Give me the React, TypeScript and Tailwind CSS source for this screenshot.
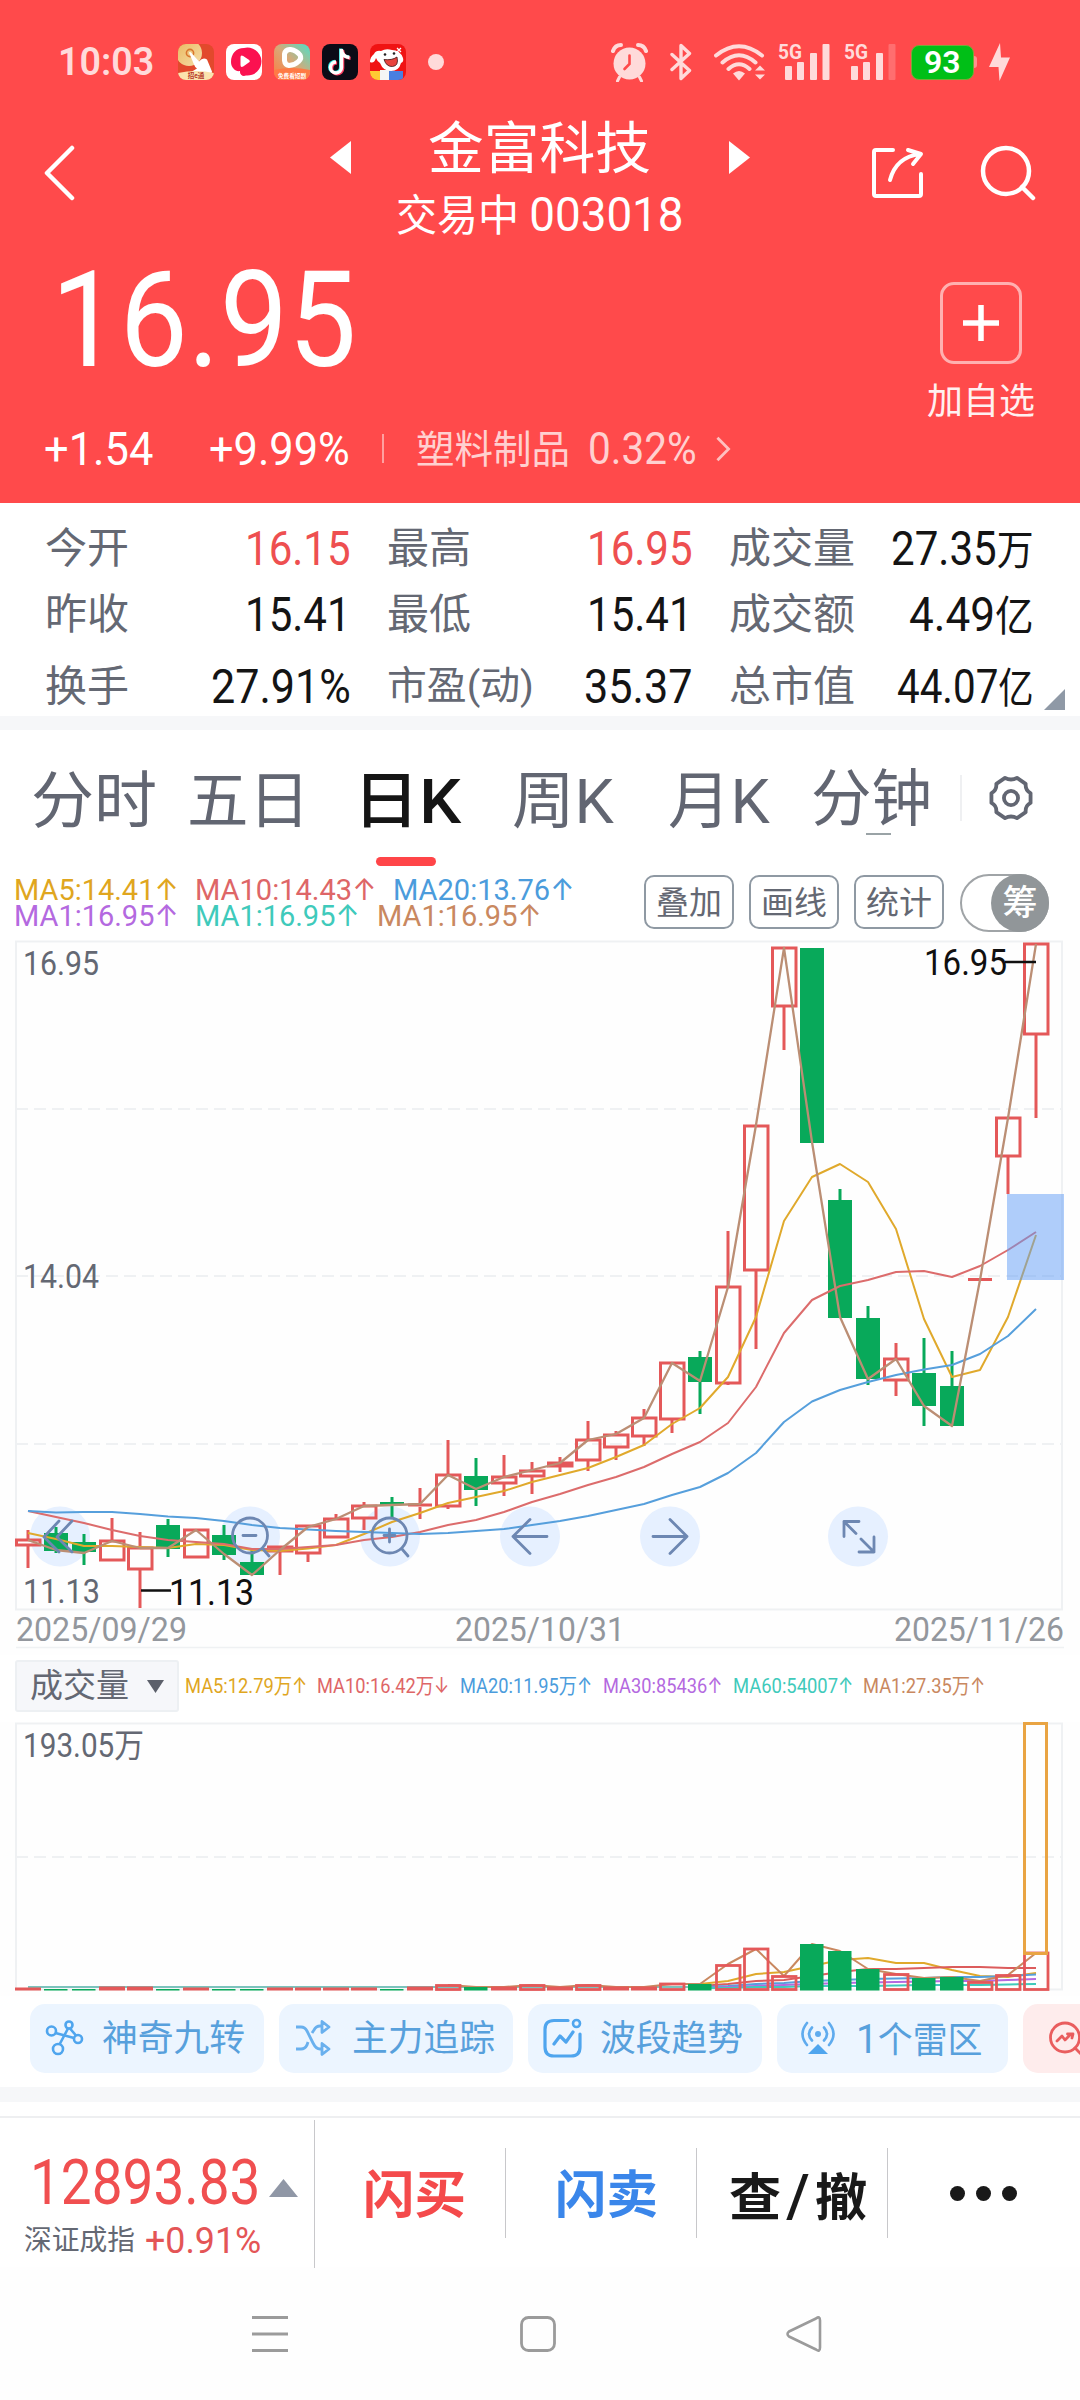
import { useLayoutEffect, useRef } from "react";
import type { ReactNode } from "react";

/* Condenses its text horizontally so that it fills the width set by className. */
function Fit({ className, children }: { className: string; children: ReactNode }) {
  const outer = useRef<HTMLSpanElement>(null);
  const inner = useRef<HTMLSpanElement>(null);
  useLayoutEffect(() => {
    const fit = () => {
      if (!outer.current || !inner.current) return;
      const w = inner.current.offsetWidth;
      if (w > 0) inner.current.style.transform = `scaleX(${outer.current.offsetWidth / w})`;
    };
    fit();
    document.fonts?.ready.then(fit);
  }, []);
  return (
    <span ref={outer} className={`block shrink-0 ${className}`}>
      <span ref={inner} className="inline-block origin-left whitespace-pre">
        {children}
      </span>
    </span>
  );
}

function StatusBar() {
  return (
    <div className="flex h-[112px] items-center pt-[12px] text-[#ffdada]">
      <Fit className="ml-[58px] w-[96px] text-[38px] leading-[40px] font-semibold">10:03</Fit>
      <div className="ml-[24px] flex gap-[12px]">
        <svg width="36" height="36" viewBox="0 0 36 36">
          <defs>
            <clipPath id="app"><rect width="36" height="36" rx="8" /></clipPath>
            <linearGradient id="gold" x1="0" y1="0" x2="1" y2="1">
              <stop offset="0" stopColor="#e9b65c" /><stop offset="1" stopColor="#f6dfa8" />
            </linearGradient>
            <linearGradient id="mix" x1="0" y1="1" x2="1" y2="0">
              <stop offset="0" stopColor="#ff7a3d" /><stop offset="0.5" stopColor="#d9a877" /><stop offset="1" stopColor="#4ee0c8" />
            </linearGradient>
          </defs>
          <g clipPath="url(#app)">
            <rect width="36" height="36" fill="#e2492c" />
            <circle cx="11" cy="9" r="13" fill="url(#gold)" />
            <circle cx="12" cy="9" r="3.6" fill="none" stroke="#d9772e" strokeWidth="1.6" />
            <path d="M11 8.500q1-1 2 0l8 9q4-5 8-2l5 12-1 4H18l-4-4 5-3q-2-1-3-4z" fill="#fff" />
            <path d="M0 29q18-4 36 0v8H0z" fill="#fbe3ae" />
          </g>
          <text x="18" y="34" fontSize="6.5" fontWeight="700" textAnchor="middle" fill="#b5372a">招e通</text>
        </svg>
        <svg width="36" height="36" viewBox="0 0 36 36">
          <rect width="36" height="36" rx="8" fill="#fff" />
          <path d="M18 4a14 14 0 1 1 2 27.500c-3 1.500-6.500-.5-6-4.500-4 1-9-3-9-9C5 10 10 4 18 4z" fill="#fb1150" />
          <path d="M14.500 13.500q0-3 2.700-1.500l5.600 3.700q2 1.500 0 2.800l-5.600 4q-2.700 1.300-2.700-1.500z" fill="#fff" />
        </svg>
        <svg width="36" height="36" viewBox="0 0 36 36">
          <g clipPath="url(#app)">
            <rect width="36" height="36" fill="url(#mix)" />
            <path d="M0 26q18-4 36 0v10H0z" fill="#ff7a45" />
          </g>
          <path d="M10.500 10q1-5 6-4.500 6 1 9.500 5.500 2 3.500-1.500 6.500-4 3.800-9.500 4-4-.5-4.500-5z" fill="none" stroke="#fff" strokeWidth="5" strokeLinejoin="round" />
          <text x="18" y="33.500" fontSize="5.600" fontWeight="700" textAnchor="middle" fill="#fff">免费看短剧</text>
        </svg>
        <svg width="36" height="36" viewBox="0 0 36 36">
          <rect width="36" height="36" rx="8" fill="#0b0b16" />
          <g fill="none" strokeWidth="3.400">
            <path d="M19.500 5v18.500a5.500 5.500 0 1 1-5.500-5.500M19.500 6c.5 4.500 3.500 7 8 7.500" stroke="#35e6e0" transform="translate(-.8 -.6)" />
            <path d="M19.500 5v18.500a5.500 5.500 0 1 1-5.500-5.500M19.500 6c.5 4.500 3.500 7 8 7.500" stroke="#ff3f63" transform="translate(1.100 .9)" />
            <path d="M19.500 5v18.500a5.500 5.500 0 1 1-5.500-5.500M19.500 6c.5 4.500 3.500 7 8 7.500" stroke="#fff" />
          </g>
        </svg>
        <svg width="36" height="36" viewBox="0 0 36 36">
          <g clipPath="url(#app)">
            <rect width="36" height="36" fill="#f01313" />
            <path d="M4 10q2-4 7-3 5-3 11-1 8 0 11 8 1 4-2 5-2 8-10 8-8 0-11-8-3-2-4-5-2 6-6 4 0-5 4-8z" fill="#fff" />
            <path d="M0 27h10v9H0z" fill="#ffc933" />
            <rect x="10" y="26" width="10" height="10" fill="#f5f5f5" />
            <rect x="19" y="27" width="14" height="9" fill="#4a7fe0" />
          </g>
          <path d="M14 15.500q8 1 13-2.500 2 9-4.500 9.500-6 .5-8.500-7z" fill="#e8443e" stroke="#3a1515" strokeWidth=".8" />
          <circle cx="15" cy="10.500" r="1.300" fill="#222" /><circle cx="24" cy="9.500" r="1.300" fill="#222" />
          <path d="M27 4l4 4m0-4-4 4" stroke="#fff" strokeWidth="1.200" />
        </svg>
      </div>
      <span className="ml-[22px] size-[16px] rounded-full bg-[#ffdada]" />
      <svg className="ml-[167px]" width="37" height="40" viewBox="0 0 37 40" fill="none" stroke="currentColor">
        <circle cx="18.500" cy="21.500" r="16" fill="currentColor" stroke="none" />
        <path d="M2 9Q4 3 10 3M35 9Q33 3 27 3" strokeWidth="4" strokeLinecap="round" />
        <path d="M8.500 35l-2 4M28.500 35l2 4" strokeWidth="3" strokeLinecap="round" />
        <path d="M18.500 13.500v8.500l-5 5" stroke="#ff4a4b" strokeWidth="2.600" strokeLinecap="round" />
      </svg>
      <svg className="ml-[22px]" width="22" height="38" viewBox="0 0 22 38" fill="none" stroke="currentColor" strokeWidth="3.400" strokeLinecap="round" strokeLinejoin="round">
        <path d="M2 11.500l17.500 16L11 35.500V2.500l8.500 8-17.500 16" />
      </svg>
      <svg className="ml-[22px]" width="52" height="38" viewBox="0 0 52 38" fill="none" stroke="currentColor" strokeWidth="4" strokeLinecap="round">
        <path d="M2 12.500Q25 -6 48 12.500M8.500 19.500Q25 5 41.500 19.500M14.500 26Q25 16.500 35.500 26" />
        <path d="M19 30.500q6-5 12 0l-6 7z" fill="currentColor" stroke="none" />
        <path d="M41 27.500l5-5 5 5zM41 31.500l5 5 5-5z" fill="currentColor" stroke="none" />
      </svg>
      <svg className="ml-[12px] overflow-visible" width="54" height="40" viewBox="0 0 54 40" fill="currentColor">
        <text x="0" y="17" fontSize="21" fontWeight="700" textLength="24" lengthAdjust="spacingAndGlyphs">5G</text>
        <rect x="7" y="24" width="7" height="14" rx="1" /><rect x="19" y="20" width="7" height="18" rx="1" />
        <rect x="32" y="11" width="7" height="27" rx="1" /><rect x="44.500" y="2" width="7" height="36" rx="1" />
      </svg>
      <svg className="ml-[12px] overflow-visible" width="54" height="40" viewBox="0 0 54 40" fill="currentColor">
        <text x="0" y="17" fontSize="21" fontWeight="700" textLength="24" lengthAdjust="spacingAndGlyphs">5G</text>
        <rect x="7" y="24" width="7" height="14" rx="1" /><rect x="19" y="20" width="7" height="18" rx="1" />
        <rect x="32" y="11" width="7" height="27" rx="1" /><rect x="44.500" y="2" width="7" height="36" rx="1" opacity=".25" />
      </svg>
      <div className="ml-[13px] flex items-center">
        <span className="flex h-[35px] w-[63px] items-center justify-center rounded-[8px] border border-[#7aa838] bg-[#00bf17] text-white">
          <Fit className="w-[37px] text-[32px] leading-[35px] font-semibold">93</Fit>
        </span>
        <span className="h-[12px] w-[3px] rounded-r-[3px] bg-[#ff8f8f]" />
      </div>
      <svg className="ml-[12px]" width="22" height="40" viewBox="0 0 22 40" fill="currentColor">
        <path d="M11 1L0 25h9.500l1 14L21 15.500h-9z" />
      </svg>
    </div>
  );
}

function Header() {
  return (
    <header className="h-[503px] bg-[#ff4a4b] text-white">
      <StatusBar />
      <div className="flex h-[134px] items-start">
        <svg className="mt-[33px] ml-[43px]" width="32" height="56" viewBox="0 0 32 56" fill="none" stroke="#fff" strokeWidth="4.500" strokeLinecap="round" strokeLinejoin="round">
          <path d="M29 3L4 28l25 25" />
        </svg>
        <svg className="mt-[29px] ml-[255px]" width="21" height="33" viewBox="0 0 21 33" fill="#fff"><path d="M21 0v33L0 16.500z" /></svg>
        <div className="ml-[45px] flex w-[287px] flex-col items-center">
          <Fit className="w-[223px] text-[56px] leading-[74px]">金富科技</Fit>
          <Fit className="w-[288px] text-[43px] leading-[57px]">
            交易中 <span className="text-[48px]">003018</span>
          </Fit>
        </div>
        <svg className="mt-[29px] ml-[46px]" width="21" height="33" viewBox="0 0 21 33" fill="#fff"><path d="M0 0v33l21-16.500z" /></svg>
        <svg className="mt-[33px] ml-[121px]" width="54" height="56" viewBox="0 0 54 56" fill="none" stroke="#fff" strokeWidth="4" strokeLinecap="round" strokeLinejoin="round">
          <path d="M22 5H5q-2 0-2 2v42q0 2 2 2h43q2 0 2-2V29" />
          <path d="M19 35Q25 12 49 9M37 5l13 4-8 10" />
        </svg>
        <svg className="mt-[33px] ml-[55px]" width="56" height="56" viewBox="0 0 56 56" fill="none" stroke="#fff" strokeWidth="4.500" strokeLinecap="round">
          <circle cx="26" cy="26" r="23" /><path d="M42 42l11 11" />
        </svg>
      </div>
      <div className="flex">
        <div>
          <Fit className="ml-[51px] w-[306px] text-[134px] leading-[150px]">16.95</Fit>
          <div className="mt-[-4px] flex h-[113px] items-center text-[47px] leading-[60px]">
            <Fit className="ml-[44px] w-[109px]">+1.54</Fit>
            <Fit className="ml-[56px] w-[141px]">+9.99%</Fit>
            <span className="ml-[32px] h-[29px] w-[2px] bg-[#ffa0a0]" />
            <Fit className="ml-[32px] w-[154px] pt-[2px] text-[39px] text-[#ffd0d0]">塑料制品</Fit>
            <Fit className="ml-[18px] w-[109px] pt-[1px] text-[45px] text-[#ffd0d0]">0.32%</Fit>
            <svg className="ml-[18px]" width="16" height="26" viewBox="0 0 16 28" fill="none" stroke="#ffc0c0" strokeWidth="3"><path d="M2 2l12 12L2 26" /></svg>
          </div>
        </div>
        <div className="mr-[44px] ml-auto flex w-[110px] flex-col items-center pt-[36px]">
          <div className="flex size-[82px] items-center justify-center rounded-[14px] border-[3px] border-[#ffb0b0]">
            <svg width="36" height="36" viewBox="0 0 36 36" stroke="#fff" strokeWidth="5.500"><path d="M18 0v36M0 18h36" /></svg>
          </div>
          <Fit className="w-[108px] text-[36px] leading-[76px] text-[#fff0f0]">加自选</Fit>
        </div>
      </div>
    </header>
  );
}

function Stats() {
  return (
    <section className="relative grid h-[213px] grid-cols-[305px_305px_305px] grid-rows-[66px_66px_70px] gap-x-[37px] bg-white pt-[12px] pl-[45px] text-[48px] leading-[67px] text-[#141414]">
      <div className="flex justify-between"><Fit className="w-[84px] text-[42px] text-[#646873]">今开</Fit><Fit className="mr-[-1px] w-[106px] text-[#ee4f50]">16.15</Fit></div>
      <div className="flex justify-between"><Fit className="w-[84px] text-[42px] text-[#646873]">最高</Fit><Fit className="mr-[-1px] w-[106px] text-[#ee4f50]">16.95</Fit></div>
      <div className="flex justify-between"><Fit className="w-[126px] text-[42px] text-[#646873]">成交量</Fit><Fit className="w-[143px]">27.35<span className="text-[42px]">万</span></Fit></div>
      <div className="flex justify-between"><Fit className="w-[84px] text-[42px] text-[#646873]">昨收</Fit><Fit className="mr-[-1px] w-[106px]">15.41</Fit></div>
      <div className="flex justify-between"><Fit className="w-[84px] text-[42px] text-[#646873]">最低</Fit><Fit className="mr-[-1px] w-[106px]">15.41</Fit></div>
      <div className="flex justify-between"><Fit className="w-[126px] text-[42px] text-[#646873]">成交额</Fit><Fit className="w-[125px]">4.49<span className="text-[42px]">亿</span></Fit></div>
      <div className="flex justify-between leading-[79px]"><Fit className="w-[84px] text-[42px] text-[#646873]">换手</Fit><Fit className="mr-[-1px] w-[140px]">27.91%</Fit></div>
      <div className="flex justify-between leading-[79px]"><Fit className="w-[147px] text-[39px] text-[#646873]">市盈(动)</Fit><Fit className="mr-[-1px] w-[109px]">35.37</Fit></div>
      <div className="flex justify-between leading-[79px]"><Fit className="w-[126px] text-[42px] text-[#646873]">总市值</Fit><Fit className="w-[137px]">44.07<span className="text-[42px]">亿</span></Fit></div>
      <svg className="absolute right-[15px] bottom-[6px]" width="21" height="21" viewBox="0 0 21 21"><path d="M21 0v21H0z" fill="#8f99a6" /></svg>
    </section>
  );
}

function Tabs() {
  return (
    <nav className="flex h-[143px] items-start bg-white text-[62px] leading-[143px] text-[#626672]">
      <Fit className="ml-[31px] w-[126px]">分时</Fit>
      <Fit className="ml-[30px] w-[123px]">五日</Fit>
      <div className="ml-[43px] w-[108px]">
        <Fit className="h-[127px] w-[108px] font-medium text-[#151515]">日K</Fit>
        <div className="ml-[23px] h-[9px] w-[60px] rounded-full bg-[#ff4548]" />
      </div>
      <Fit className="ml-[51px] w-[102px]">周K</Fit>
      <Fit className="ml-[54px] w-[102px]">月K</Fit>
      <div className="ml-[41px] w-[121px]">
        <Fit className="h-[103px] w-[121px] leading-[139px]">分钟</Fit>
        <div className="ml-[55px] h-[2px] w-[25px] bg-[#9aa3a6]" />
      </div>
      <span className="mt-[45px] ml-[28px] h-[46px] w-[2px] bg-[#eff0f2]" />
      <svg className="mt-[43px] ml-[24px]" width="50" height="50" viewBox="0 0 46 46" fill="none" stroke="#626672" strokeWidth="3.500" strokeLinejoin="round">
        <path d="M17.500 4.500q5.500 3 11 0l8 5.500q-.5 6 4.500 8.500v9q-5 2.500-4.500 8.500l-8 5.500q-5.500-3-11 0l-8-5.500q.5-6-4.500-8.500v-9q5-2.500 4.500-8.500z" />
        <circle cx="23" cy="23" r="6.500" />
      </svg>
    </nav>
  );
}

function Indicators() {
  return (
    <div className="flex h-[67px] items-start bg-white">
      <div className="ml-[14px] w-[630px] pt-[4px] text-[30px] leading-[26px]">
        <div className="flex">
          <Fit className="w-[165px] text-[#e0a61e]">MA5:14.41↑</Fit>
          <Fit className="ml-[16px] w-[181px] text-[#de6667]">MA10:14.43↑</Fit>
          <Fit className="ml-[17px] w-[181px] text-[#4b9cdc]">MA20:13.76↑</Fit>
        </div>
        <div className="flex">
          <Fit className="w-[165px] text-[#b469e0]">MA1:16.95↑</Fit>
          <Fit className="ml-[16px] w-[165px] text-[#3fcabb]">MA1:16.95↑</Fit>
          <Fit className="ml-[17px] w-[165px] text-[#c98860]">MA1:16.95↑</Fit>
        </div>
      </div>
      <div className="flex gap-[15px] pt-[2px] text-[32px] leading-[53px] text-[#646873]">
        <div className="flex h-[54px] w-[90px] justify-center rounded-[10px] border-2 border-[#8f99a3]"><Fit className="w-[66px]">叠加</Fit></div>
        <div className="flex h-[54px] w-[90px] justify-center rounded-[10px] border-2 border-[#8f99a3]"><Fit className="w-[66px]">画线</Fit></div>
        <div className="flex h-[54px] w-[90px] justify-center rounded-[10px] border-2 border-[#8f99a3]"><Fit className="w-[66px]">统计</Fit></div>
        <div className="-mt-[1px] ml-[1px] flex h-[58px] w-[89px] justify-end rounded-full border-2 border-[#a0a4a7]">
          <div className="-mt-[2px] -mr-[2px] size-[58px] shrink-0 rounded-full bg-[#919699] text-center text-[35px] leading-[60px] font-medium text-white">筹</div>
        </div>
      </div>
    </div>
  );
}

type Candle = [up: 0 | 1, high: number, top: number, bottom: number, low: number];
const candles: Candle[] = [
  [1, 1530, 1539, 1546, 1568], [0, 1527, 1533, 1551, 1553], [0, 1534, 1542, 1552, 1565], [1, 1518, 1540, 1561, 1561],
  [1, 1532, 1547, 1570, 1608], [0, 1519, 1525, 1549, 1557], [1, 1529, 1529, 1558, 1558], [0, 1525, 1535, 1555, 1560],
  [0, 1548, 1562, 1575, 1575], [1, 1546, 1546, 1552, 1575], [1, 1525, 1525, 1554, 1562], [1, 1514, 1518, 1538, 1538],
  [1, 1502, 1505, 1519, 1530], [0, 1497, 1502, 1505, 1518], [1, 1488, 1503, 1507, 1519], [1, 1440, 1474, 1507, 1509],
  [0, 1458, 1476, 1490, 1506], [1, 1455, 1476, 1484, 1496], [1, 1462, 1470, 1477, 1494], [1, 1457, 1462, 1467, 1472],
  [1, 1421, 1439, 1461, 1471], [1, 1431, 1434, 1448, 1460], [1, 1409, 1417, 1437, 1446], [1, 1362, 1362, 1420, 1433],
  [0, 1351, 1357, 1382, 1414], [1, 1231, 1286, 1384, 1385], [1, 1125, 1125, 1271, 1349], [1, 947, 947, 1007, 1050],
  [0, 948, 948, 1143, 1143], [0, 1189, 1200, 1318, 1318], [0, 1306, 1318, 1379, 1385], [1, 1343, 1358, 1381, 1396],
  [0, 1338, 1373, 1406, 1426], [0, 1351, 1386, 1426, 1426], [1, 1278, 1278, 1281, 1281], [1, 1117, 1117, 1157, 1194],
  [1, 943, 943, 1035, 1118],
];
const close = [1540, 1550, 1553, 1541, 1548, 1548, 1530, 1554, 1575, 1550, 1527, 1519, 1506, 1505, 1504, 1475, 1489, 1477, 1470, 1463, 1440, 1434, 1418, 1363, 1381, 1287, 1125, 948, 1142, 1317, 1379, 1359, 1406, 1426, 1280, 1118, 944];
const ma5 = [1533, 1539, 1546, 1546, 1547, 1548, 1544, 1545, 1550, 1551, 1548.500, 1545, 1534, 1522, 1513, 1503, 1497, 1491, 1482, 1475, 1468, 1457, 1445, 1424, 1408, 1377, 1317, 1221, 1177, 1164, 1182, 1229, 1319, 1377, 1370, 1317, 1235];
const ma10 = [1511, 1517, 1523, 1530, 1536, 1540, 1542, 1544, 1549, 1549, 1547, 1545, 1540, 1537, 1532, 1525, 1520, 1512, 1502, 1494, 1485, 1477, 1467, 1454, 1442, 1423, 1387, 1333, 1300, 1286, 1280, 1272, 1271, 1277, 1266, 1250, 1232];
const ma20 = [1511, 1512.500, 1512, 1512, 1514, 1516.500, 1518, 1521, 1525, 1528, 1529.500, 1531, 1532, 1533, 1534, 1533, 1531, 1529, 1525, 1521, 1516, 1510, 1504, 1495, 1487, 1473, 1453, 1422, 1401.500, 1390, 1382, 1375, 1369.500, 1365, 1354, 1336, 1309];
const cx = (i: number) => 28 + 28 * i;
const path = (ys: number[], from = 0) => ys.map((y, i) => `${cx(i + from)},${y}`).join(" ");

function PriceChart() {
  return (
    <svg className="block bg-[#fefefe]" width="1080" height="715" viewBox="0 940 1080 715">
      <g fill="none" stroke="#eff1f3" strokeWidth="2">
        <rect x="16" y="941.500" width="1046" height="668" />
        <path d="M16 1109h1046M16 1276h1046M16 1444h1046" strokeDasharray="12 6" />
        <path d="M16 1647.500h1048" strokeWidth="1.500" />
      </g>
      <g fill="#e6f0ff">
        <circle cx="60" cy="1536.500" r="30" /><circle cx="250" cy="1536.500" r="30" /><circle cx="390" cy="1536.500" r="30" />
        <circle cx="530" cy="1536.500" r="30" /><circle cx="670" cy="1536.500" r="30" /><circle cx="858" cy="1536.500" r="30" />
      </g>
      <g fill="#646873" fontSize="33">
        <text x="23" y="974.500" textLength="76" lengthAdjust="spacingAndGlyphs">16.95</text>
        <text x="23" y="1288" textLength="76" lengthAdjust="spacingAndGlyphs">14.04</text>
        <text x="23" y="1603" textLength="77" lengthAdjust="spacingAndGlyphs">11.13</text>
      </g>
      {candles.map(([up, high, top, bottom, low], i) =>
        up ? (
          <g key={i} stroke="#e45859" strokeWidth="3" fill="none">
            <path d={`M${cx(i)} ${high}V${top}M${cx(i)} ${bottom}V${low}`} />
            {bottom - top > 4 ? (
              <rect x={cx(i) - 11.500} y={top + 1} width="23.500" height={bottom - top - 2} />
            ) : (
              <path d={`M${cx(i) - 12} ${(top + bottom) / 2}h24`} />
            )}
          </g>
        ) : (
          <g key={i} fill="#08a95a">
            <rect x={cx(i) - 1.500} y={high} width="3" height={low - high} />
            <rect x={cx(i) - 12} y={top} width="24" height={bottom - top} />
          </g>
        ),
      )}
      <g fill="none" strokeWidth="2" strokeLinejoin="round">
        <polyline points={path(ma5)} stroke="#e0a92c" />
        <polyline points={path(ma10)} stroke="#dc6c6c" />
        <polyline points={path(ma20)} stroke="#569fdc" />
        <polyline points={path(close)} stroke="#bb8e74" strokeWidth="2.300" />
      </g>
      <rect x="1007" y="1194" width="57" height="86" fill="#5f9bf5" fillOpacity=".5" />
      <g fill="none" stroke="#6d87b2" strokeWidth="2.800" strokeLinecap="round" strokeLinejoin="round">
        <path d="M59 1521l-15 16 15 15M72 1521l-15 16 15 15" />
        <circle cx="250" cy="1535.500" r="17.500" /><path d="M243 1535.500h13M263 1549l6 7" />
        <circle cx="389.500" cy="1535.500" r="17.500" /><path d="M384 1535.500h11M389.500 1529v13M402 1549l6 7" />
        <path d="M530 1519.500l-17 17 17 17M513 1536.500h34" />
        <path d="M670 1519.500l17 17-17 17M653 1536.500h34" />
        <path d="M859 1521.500h-15v15M844 1521.500l12 12M859 1552h15v-15M874 1552l-13-13" />
      </g>
      <g fill="#101010" fontSize="37">
        <text x="924" y="975" textLength="83" lengthAdjust="spacingAndGlyphs">16.95</text>
        <text x="169" y="1604.500" textLength="85" lengthAdjust="spacingAndGlyphs">11.13</text>
        <path d="M1005 962h31M141 1590.500h30" stroke="#101010" strokeWidth="2.500" />
      </g>
      <g fill="#93979d" fontSize="33">
        <text x="16" y="1641" textLength="171" lengthAdjust="spacingAndGlyphs">2025/09/29</text>
        <text x="455" y="1641" textLength="170" lengthAdjust="spacingAndGlyphs">2025/10/31</text>
        <text x="894" y="1641" textLength="170" lengthAdjust="spacingAndGlyphs">2025/11/26</text>
      </g>
    </svg>
  );
}

function VolumeHeader() {
  return (
    <div className="flex h-[67px] items-start bg-white pt-[5px] text-[21px] leading-[52px]">
      <div className="ml-[15px] flex h-[52px] w-[164px] items-center rounded-[3px] border-2 border-[#edf0f3] bg-[#f6f7fa]">
        <Fit className="ml-[13px] w-[99px] text-[33px] leading-[50px] text-[#646873]">成交量</Fit>
        <svg className="ml-[18px]" width="17" height="13" viewBox="0 0 17 13"><path d="M0 0h17l-8.500 13z" fill="#5c606b" /></svg>
      </div>
      <Fit className="ml-[6px] w-[122px] text-[#e0a61e]">MA5:12.79万↑</Fit>
      <Fit className="ml-[10px] w-[132px] text-[#de6667]">MA10:16.42万↓</Fit>
      <Fit className="ml-[11px] w-[132px] text-[#4b9cdc]">MA20:11.95万↑</Fit>
      <Fit className="ml-[11px] w-[119px] text-[#b469e0]">MA30:85436↑</Fit>
      <Fit className="ml-[11px] w-[120px] text-[#3fcabb]">MA60:54007↑</Fit>
      <Fit className="ml-[10px] w-[122px] text-[#c98860]">MA1:27.35万↑</Fit>
    </div>
  );
}

/* Top edge of every volume bar; the base line is at 1990.5. */
const volumeTops = [1988, 1989, 1989, 1987, 1987, 1989, 1988, 1989, 1989, 1988, 1988, 1988, 1988, 1989, 1987, 1985, 1987, 1987, 1985, 1987, 1985, 1987, 1987, 1983.500, 1984, 1965, 1948.500, 1976, 1944, 1951, 1969, 1974, 1978, 1977, 1982, 1975, 1952.500];

function VolumeChart() {
  return (
    <svg className="block bg-[#fefefe]" width="1080" height="274" viewBox="0 1722 1080 274">
      <g fill="none" stroke="#eff1f3" strokeWidth="2">
        <rect x="16" y="1723.500" width="1046" height="266" />
        <path d="M16 1857h1046" strokeDasharray="12 6" />
      </g>
      <text x="23" y="1757" fontSize="33" fill="#646873" textLength="121" lengthAdjust="spacingAndGlyphs">193.05万</text>
      <g fill="none" strokeWidth="2" strokeLinejoin="round">
        <path d="M28 1987H728" stroke="#7cc3bd" />
        <polyline points={path([1984, 1981, 1974, 1972, 1966, 1960, 1958, 1963, 1963, 1970, 1976, 1977, 1973], 24)} stroke="#e0a92c" />
        <polyline points={path([1986, 1984, 1981, 1980, 1976, 1972, 1969, 1969, 1968, 1967, 1967, 1968, 1968], 24)} stroke="#dc5c5c" />
        <polyline points={path([1987, 1986, 1984, 1983, 1981, 1980, 1979, 1978.500, 1978, 1977, 1977, 1976, 1974.500], 24)} stroke="#569fdc" />
        <polyline points={path([1988, 1987, 1986, 1985, 1984, 1983, 1982.500, 1982, 1981.500, 1981, 1981, 1980, 1979], 24)} stroke="#b469e0" />
        <polyline points={path([1988, 1988, 1987, 1987, 1986, 1986, 1986, 1985.500, 1985, 1985, 1985, 1984.500, 1984], 24)} stroke="#3fcabb" />
        <polyline points={path([1985, 1987, 1987, 1985, 1987, 1985, 1987, 1987, 1984, 1984, 1964, 1949, 1976, 1944, 1951, 1969, 1974, 1978, 1977, 1981, 1975, 1953], 15)} stroke="#c98860" />
      </g>
      {volumeTops.map((top, i) =>
        !candles[i][0] ? (
          <rect key={i} x={cx(i) - 12} y={top} width="23.500" height={1990.500 - top} fill="#08a95a" />
        ) : top > 1986 ? (
          <rect key={i} x={cx(i) - 13} y={top - 0.500} width="26" height={1991 - top} fill="#e45859" />
        ) : (
          <rect key={i} x={cx(i) - 11.500} y={top + 0.500} width="23.500" height={1989 - top} fill="none" stroke="#e45859" strokeWidth="2.800" />
        ),
      )}
      <rect x="1024.500" y="1723.500" width="22" height="230" fill="none" stroke="#e9a443" strokeWidth="3" />
    </svg>
  );
}

function Chips() {
  return (
    <div className="flex h-[91px] gap-[15px] overflow-hidden bg-white pt-[8px] pl-[30px] text-[36px] leading-[71px] text-[#57a0dc]">
      <div className="flex h-[69px] w-[234px] shrink-0 rounded-[15px] bg-[#ecf5ff]">
        <svg className="mt-[15px] ml-[15px]" width="40" height="40" viewBox="0 0 40 40" fill="none" stroke="#4fa5ee" strokeWidth="2.600">
          <circle cx="6.500" cy="12" r="4.500" /><circle cx="24" cy="6" r="3.500" /><circle cx="33" cy="20" r="4" /><circle cx="13" cy="30" r="5" />
          <path d="M10.500 14l18.500 5M25 9.500l6 7M14.500 25.500L23 9.500" />
        </svg>
        <Fit className="ml-[17px] w-[143px]">神奇九转</Fit>
      </div>
      <div className="flex h-[69px] w-[234px] shrink-0 rounded-[15px] bg-[#ecf5ff]">
        <svg className="mt-[15px] ml-[16px]" width="38" height="38" viewBox="0 0 38 38" fill="none" stroke="#69b0ee" strokeWidth="2.800" strokeLinejoin="round">
          <path d="M1 8h5q4 0 6 4l6 12q3 6 7 6h2M1 30h5q4 0 6-4l1-3M17 14l2-3q2-4 6-4h2" />
          <path d="M27 2.500l7 5.500-7 5.500zM27 24.500l7 5.500-7 5.500z" />
        </svg>
        <Fit className="ml-[19px] w-[143px]">主力追踪</Fit>
      </div>
      <div className="flex h-[69px] w-[234px] shrink-0 rounded-[15px] bg-[#ecf5ff]">
        <svg className="mt-[13px] ml-[14px]" width="42" height="42" viewBox="0 0 42 42" fill="none" stroke="#4fa5ee" strokeWidth="3.200" strokeLinecap="round" strokeLinejoin="round">
          <path d="M26 3.500H12q-9 0-9 9V30q0 9 9 9h17q9 0 9-9V17" /><circle cx="34.500" cy="6.500" r="3.500" strokeWidth="2.600" />
          <path d="M12 27l6-8 6 6 7-10" />
        </svg>
        <Fit className="ml-[16px] w-[143px]">波段趋势</Fit>
      </div>
      <div className="flex h-[69px] w-[231px] shrink-0 rounded-[15px] bg-[#ecf5ff]">
        <svg className="mt-[16px] ml-[23px]" width="36" height="38" viewBox="0 0 36 38" fill="none" stroke="#5fabee" strokeWidth="2.600" strokeLinecap="round">
          <path d="M7 3q-9 11 0 22M29 3q9 11 0 22M12 7.500q-6 6.500 0 13M24 7.500q6 6.500 0 13" />
          <circle cx="18" cy="14" r="3" fill="#5fabee" stroke="none" /><path d="M18 24l10 10H8z" fill="#4fa5ee" stroke="none" />
        </svg>
        <Fit className="ml-[20px] w-[127px]"><span className="text-[40px]">1</span>个雷区</Fit>
      </div>
      <div className="h-[69px] w-[234px] shrink-0 rounded-[15px] bg-[#feecec]">
        <svg className="mt-[15px] ml-[25px]" width="38" height="38" viewBox="0 0 38 38" fill="none" stroke="#e95d5e" strokeWidth="2.800" strokeLinecap="round" strokeLinejoin="round">
          <circle cx="17" cy="18.500" r="14.500" /><path d="M27 29l7 7M9 22l5-5 3 4 6-6M19.500 15h5.500l-1 4" />
        </svg>
      </div>
    </div>
  );
}

function BottomBar() {
  return (
    <div className="flex h-[151px] items-start border-t-2 border-[#eeeff1] bg-white pt-[2px]">
      <div className="h-[148px] w-[315px] border-r border-[#c8c8cb]">
        <div className="flex items-center pt-[25px]">
          <Fit className="ml-[30px] w-[230px] text-[63px] leading-[76px] text-[#f04f50]">12893.83</Fit>
          <svg className="mt-[10px] ml-[9px]" width="29" height="18" viewBox="0 0 29 18"><path d="M14.500 0L29 18H0z" fill="#9097a6" /></svg>
        </div>
        <div className="flex leading-[40px]">
          <Fit className="ml-[24px] w-[111px] text-[28px] text-[#646873]">深证成指</Fit>
          <Fit className="ml-[10px] w-[116px] text-[37px] text-[#e45556]">+0.91%</Fit>
        </div>
      </div>
      <div className="mt-[28px] flex text-[51px] leading-[96px] font-medium">
        <div className="flex h-[90px] w-[191px] border-r border-[#c8c8cb] font-semibold text-[#f44a4b]"><Fit className="ml-[48px] w-[103px]">闪买</Fit></div>
        <div className="flex h-[90px] w-[191px] border-r border-[#c8c8cb] font-semibold text-[#3a86ea]"><Fit className="ml-[49px] w-[103px]">闪卖</Fit></div>
        <div className="flex h-[90px] w-[191px] border-r border-[#c8c8cb] font-bold text-[#191919]">
          <Fit className="ml-[32px] w-[138px]">查<span className="px-[5px] text-[59px] font-medium">/</span>撤</Fit>
        </div>
        <div className="flex h-[90px] items-center gap-[11px] pl-[62px]">
          <span className="size-[15px] rounded-full bg-[#191919]" />
          <span className="size-[15px] rounded-full bg-[#191919]" />
          <span className="size-[15px] rounded-full bg-[#191919]" />
        </div>
      </div>
    </div>
  );
}

export default function App() {
  return (
    <div className="h-[2400px] w-[1080px] overflow-hidden bg-[#fefefe] [font-family:Roboto,Inter,'Noto_Sans_CJK_SC',sans-serif]">
      <Header />
      <Stats />
      <div className="h-[14px] bg-[#f6f7f9]" />
      <Tabs />
      <Indicators />
      <PriceChart />
      <VolumeHeader />
      <VolumeChart />
      <Chips />
      <div className="h-[15px] bg-[#f6f7f9]" />
      <div className="h-[14px] bg-white" />
      <BottomBar />
      <div className="flex h-[132px] items-center pt-[1px]">
        <svg className="ml-[251px]" width="38" height="38" viewBox="0 0 38 38" stroke="#9b9b9b" strokeWidth="3"><path d="M1 2.500h36M1 19h36M1 35.500h36" /></svg>
        <svg className="ml-[230px]" width="38" height="38" viewBox="0 0 38 38" fill="none" stroke="#9b9b9b" strokeWidth="2.800"><rect x="2.500" y="2.500" width="33" height="33" rx="7" /></svg>
        <svg className="ml-[229px]" width="38" height="38" viewBox="0 0 38 38" fill="none" stroke="#9b9b9b" strokeWidth="2.600" strokeLinejoin="round"><path d="M30 3.500q4-3 4 2v27q0 5-4 2L3 21.500q-3-2.500 0-5z" /></svg>
      </div>
    </div>
  );
}
